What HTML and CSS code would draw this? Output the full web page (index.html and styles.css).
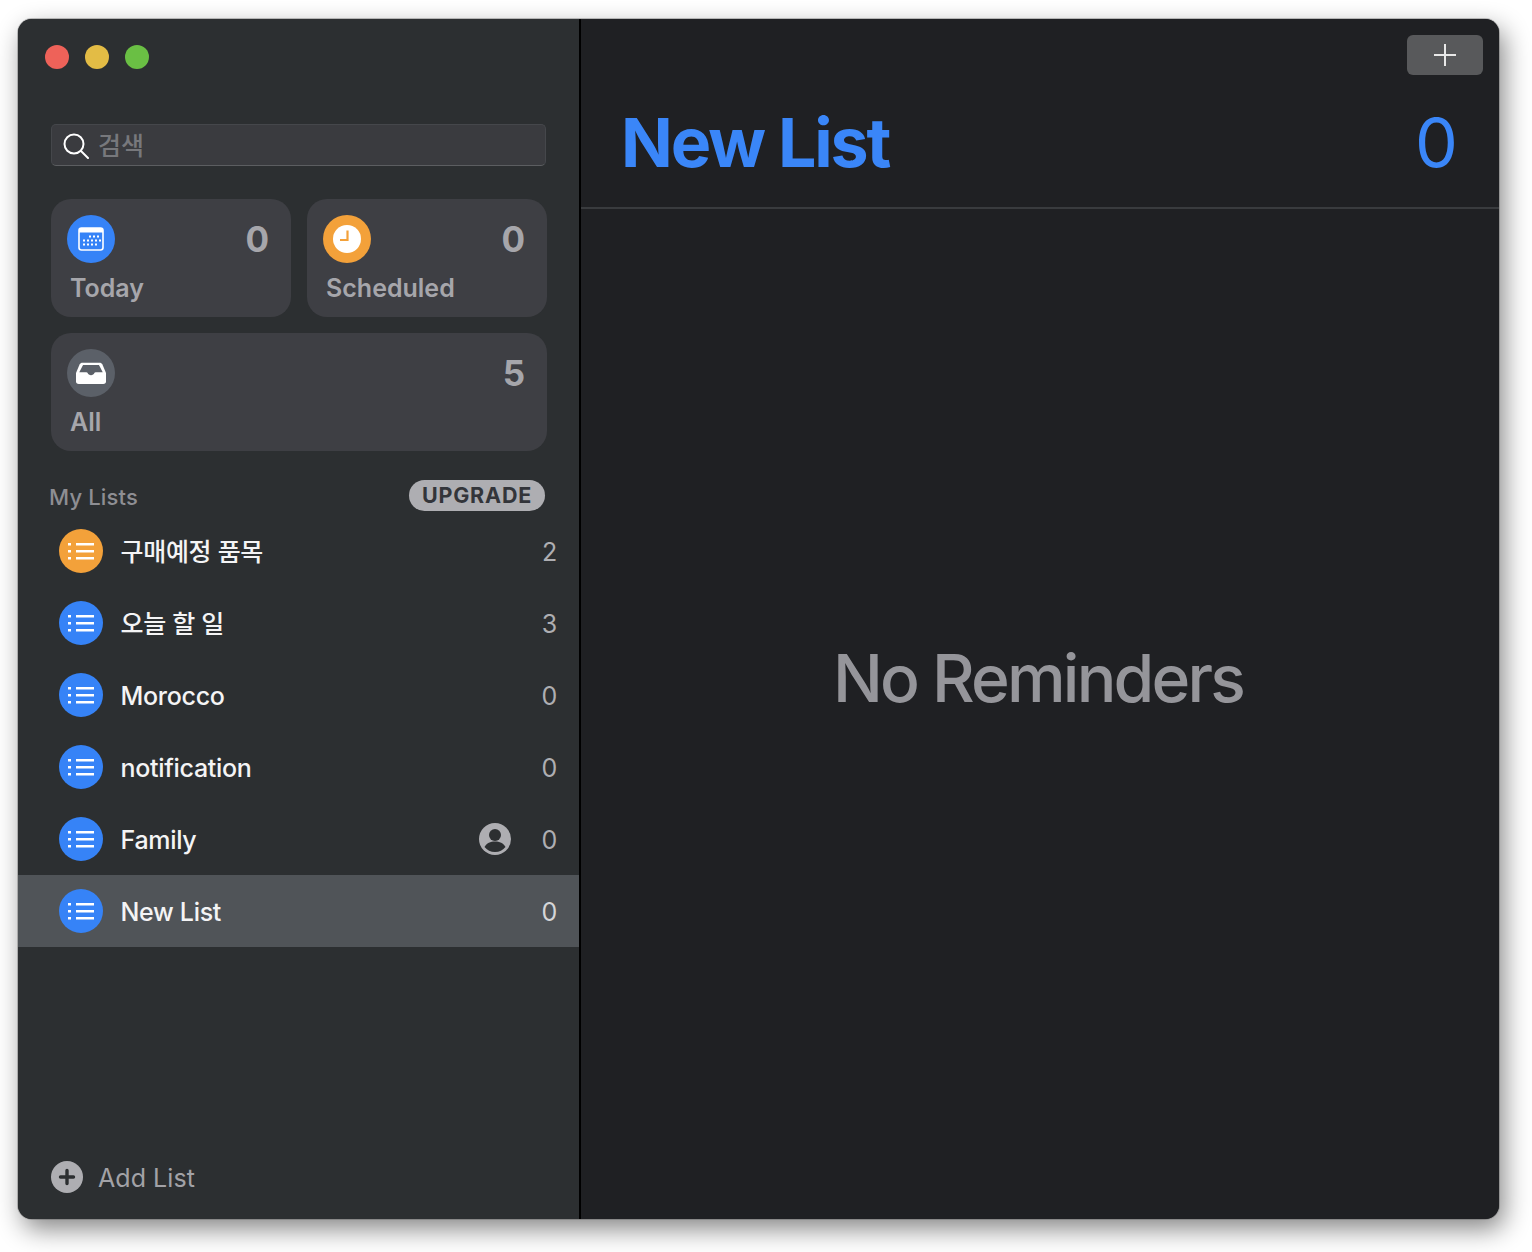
FILE: index.html
```html
<!DOCTYPE html>
<html lang="en">
<head>
  <meta charset="UTF-8" />
  <title>Reminders</title>
  <link rel="stylesheet" href="styles.css">
</head>
<body>

  <div class="window">
    <aside class="sidebar">
      <div class="traffic">
        <span class="dot dot-red"></span>
        <span class="dot dot-yellow"></span>
        <span class="dot dot-green"></span>
      </div>

      <div class="search">
        <svg class="search-icon" viewBox="0 0 26 26" fill="none" stroke="#fff" stroke-width="2">
          <circle cx="11" cy="11" r="9.5" />
          <path d="M18 18l7 7" stroke-linecap="round" />
        </svg>
        <span>검색</span>
      </div>

      <div class="cards">
        <div class="card">
          <div class="card-top">
            <span class="round round-blue">
              <svg viewBox="0 0 28 28" width="28" height="28">
                <rect x="2" y="3" width="24" height="22" rx="2.500" fill="none" stroke="#fff" stroke-width="1.600" />
                <rect x="2" y="3" width="24" height="4.500" fill="#fff" />
                <g fill="#fff">
                  <rect x="12" y="10.500" width="2" height="2" /><rect x="16" y="10.500" width="2" height="2" /><rect x="20" y="10.500" width="2" height="2" />
                  <rect x="6" y="14.500" width="2" height="2" /><rect x="10" y="14.500" width="2" height="2" /><rect x="14" y="14.500" width="2" height="2" /><rect x="18" y="14.500" width="2" height="2" /><rect x="22" y="14.500" width="2" height="2" />
                  <rect x="6" y="18.500" width="2" height="2" /><rect x="10" y="18.500" width="2" height="2" /><rect x="14" y="18.500" width="2" height="2" /><rect x="18" y="18.500" width="2" height="2" />
                </g>
              </svg>
            </span>
            <span class="card-count">0</span>
          </div>
          <div class="card-label">Today</div>
        </div>

        <div class="card">
          <div class="card-top">
            <span class="round round-orange">
              <svg viewBox="0 0 28 28" width="28" height="28">
                <circle cx="14" cy="14" r="14" fill="#fff" />
                <path d="M14.500 5.500v9.500H7" fill="none" stroke="#f3a13a" stroke-width="2.200" />
              </svg>
            </span>
            <span class="card-count">0</span>
          </div>
          <div class="card-label">Scheduled</div>
        </div>

        <div class="card card-wide">
          <div class="card-top">
            <span class="round round-gray">
              <svg viewBox="0 0 32 26" width="30" height="22" preserveAspectRatio="none">
                <path d="M7 1h18c1.500 0 2.500.7 3.200 2L32 13v10c0 1.800-1 3-3 3H3c-2 0-3-1.200-3-3V13L3.800 3C4.500 1.700 5.500 1 7 1z" fill="#fff" />
                <path d="M7.500 3.500h17L28.500 12h-7.500c-.8 0-1.200.4-1.400 1-.6 1.600-2 2.600-3.600 2.600s-3-1-3.600-2.600c-.2-.6-.6-1-1.400-1H3.500z" fill="#5b6068" />
              </svg>
            </span>
            <span class="card-count">5</span>
          </div>
          <div class="card-label">All</div>
        </div>
      </div>

      <div class="lists-head">
        <span class="lists-title">My Lists</span>
        <span class="upgrade">UPGRADE</span>
      </div>

      <ul class="lists">
        <li class="row">
          <span class="list-icon orange"><i></i></span>
          <span class="row-name row-name-ko">구매예정 품목</span>
          <span class="row-count">2</span>
        </li>
        <li class="row">
          <span class="list-icon"><i></i></span>
          <span class="row-name row-name-ko">오늘 할 일</span>
          <span class="row-count">3</span>
        </li>
        <li class="row">
          <span class="list-icon"><i></i></span>
          <span class="row-name">Morocco</span>
          <span class="row-count">0</span>
        </li>
        <li class="row">
          <span class="list-icon"><i></i></span>
          <span class="row-name">notification</span>
          <span class="row-count">0</span>
        </li>
        <li class="row">
          <span class="list-icon"><i></i></span>
          <span class="row-name">Family</span>
          <svg class="shared" viewBox="0 0 32 32">
            <circle cx="16" cy="16" r="16" fill="#aeaeb2" />
            <circle cx="16" cy="12" r="6" fill="#2c2f31" />
            <path d="M5.500 24c2-3.800 6-5.500 10.500-5.500s8.500 1.700 10.500 5.500c-2.500 3-6.200 5-10.500 5s-8-2-10.500-5z" fill="#2c2f31" />
          </svg>
          <span class="row-count">0</span>
        </li>
        <li class="row selected">
          <span class="list-icon"><i></i></span>
          <span class="row-name">New List</span>
          <span class="row-count">0</span>
        </li>
      </ul>

      <div class="add-list">
        <svg viewBox="0 0 32 32" width="32" height="32">
          <circle cx="16" cy="16" r="16" fill="#aeaeb2" />
          <path d="M16 9.500v13M9.500 16h13" stroke="#2c2f31" stroke-width="3.400" stroke-linecap="round" />
        </svg>
        <span class="add-label">Add List</span>
      </div>
    </aside>

    <main class="content">
      <div class="toolbar">
        <button class="add-btn">
          <svg viewBox="0 0 24 24" width="24" height="24" stroke="#e8e8e8" stroke-width="2">
            <path d="M12 1v22M1 12h22" />
          </svg>
        </button>
      </div>
      <header class="content-head">
        <h1>New List</h1>
        <span class="head-count">0</span>
      </header>
      <div class="empty">No Reminders</div>
    </main>
  </div>

</body>
</html>
```

FILE: styles.css
```css
* {
  box-sizing: border-box;
}

body {
  margin: 0;
  height: 1252px;
  padding: 19px 33px 33px 18px;
  background: #fff;
  font-family: Inter, "Noto Sans CJK KR", sans-serif;
  overflow: hidden;
}

.window {
  display: flex;
  height: 1200px;
  border-radius: 14px;
  overflow: hidden;
  background: #1f2023;
  box-shadow: 0 0 0 1px rgba(90, 90, 90, 0.35), 5px 10px 26px rgba(0, 0, 0, 0.48);
}

/* sidebar */
.sidebar {
  width: 561px;
  flex: none;
  display: flex;
  flex-direction: column;
  background: #2c2f31;
}

.traffic {
  display: flex;
  gap: 16px;
  padding: 26px 0 0 27px;
}

.dot {
  width: 24px;
  height: 24px;
  border-radius: 50%;
}

.dot-red { background: #ee6259; }
.dot-yellow { background: #e3bc45; }
.dot-green { background: #6abf44; }

.search {
  display: flex;
  align-items: center;
  gap: 9px;
  width: 495px;
  height: 42px;
  margin: 55px 0 0 33px;
  padding: 0 0 2px 11px;
  background: #3a3b3f;
  border: 1px solid #45474b;
  border-bottom-color: #5c5e61;
  border-radius: 5px;
  color: #77787c;
  font-size: 25px;
  font-weight: 500;
}

.search-icon {
  width: 26px;
  height: 26px;
  margin-top: 3px;
}

.cards {
  display: grid;
  grid-template-columns: 240px 240px;
  gap: 16px;
  margin: 33px 0 0 33px;
}

.card {
  height: 118px;
  padding: 16px 22px 0 16px;
  border-radius: 20px;
  background: #3e3f44;
}

.card-wide {
  grid-column: 1 / 3;
}

.card-top {
  display: flex;
  justify-content: space-between;
  align-items: center;
}

.round {
  display: flex;
  align-items: center;
  justify-content: center;
  width: 48px;
  height: 48px;
  border-radius: 50%;
}

.round-blue { background: #3683f7; }
.round-orange { background: #f3a13a; }
.round-gray { background: #5b6068; }

.card-count {
  color: #a6a6ab;
  font-size: 35px;
  font-weight: 700;
}

.card-label {
  margin: 9px 0 0 3px;
  color: #a6a6ab;
  font-size: 25px;
  font-weight: 600;
  line-height: 32px;
}

.lists-head {
  display: flex;
  justify-content: space-between;
  align-items: center;
  width: 496px;
  margin: 29px 0 0 31px;
}

.lists-title {
  margin-top: 3px;
  color: #8e8e93;
  font-size: 22px;
  font-weight: 500;
  letter-spacing: 0.15px;
}

.upgrade {
  width: 136px;
  height: 31px;
  border-radius: 16px;
  background: #aeaeb2;
  color: #33353a;
  font-size: 21.5px;
  font-weight: 700;
  letter-spacing: 0.8px;
  line-height: 31px;
  text-align: center;
}

.lists {
  list-style: none;
  margin: 4px 0 0;
  padding: 0;
}

.row {
  display: flex;
  align-items: center;
  height: 72px;
  padding: 0 22px 0 41px;
  color: #f4f4f5;
  font-size: 25px;
  font-weight: 500;
  letter-spacing: -0.3px;
}

.row.selected {
  background: #505458;
}

.list-icon {
  display: flex;
  align-items: center;
  justify-content: center;
  width: 44px;
  height: 44px;
  flex: none;
  border-radius: 50%;
  background: #3683f7;
}

.list-icon.orange {
  background: #f3a13a;
}

/* three lines and three dots of the list glyph */
.list-icon i {
  display: block;
  width: 26px;
  height: 17px;
  background:
    linear-gradient(#fff, #fff) 8px 0 / 18px 2.5px no-repeat,
    linear-gradient(#fff, #fff) 8px 7px / 18px 2.5px no-repeat,
    linear-gradient(#fff, #fff) 8px 14px / 18px 2.5px no-repeat,
    linear-gradient(#fff, #fff) 0 0 / 3px 2.5px no-repeat,
    linear-gradient(#fff, #fff) 0 7px / 3px 2.5px no-repeat,
    linear-gradient(#fff, #fff) 0 14px / 3px 2.5px no-repeat;
}

.row-name {
  flex: 1;
  margin-left: 17.5px;
  padding-top: 2px;
}

.row-name-ko {
  padding: 0 0 2px;
}

.shared {
  width: 32px;
  height: 32px;
  margin-right: 31px;
}

.row-count {
  padding-top: 2px;
  color: #aeaeb2;
  font-size: 25px;
  font-weight: 400;
}

.selected .row-count {
  color: #d5d6d8;
}

.add-list {
  display: flex;
  align-items: center;
  gap: 15px;
  margin: auto 0 26px 33px;
  color: #a2a2a7;
  font-size: 25px;
}

.add-label {
  padding-top: 2px;
  letter-spacing: 0.05px;
}

/* divider + main pane */
.content {
  flex: 1;
  display: flex;
  flex-direction: column;
  border-left: 2px solid #000;
  background: #1f2023;
}

.toolbar {
  display: flex;
  justify-content: flex-end;
  padding: 16px 16px 0 0;
}

.add-btn {
  display: flex;
  align-items: center;
  justify-content: center;
  width: 76px;
  height: 40px;
  padding: 0;
  border: 0;
  border-radius: 6px;
  background: #58595b;
}

.content-head {
  display: flex;
  justify-content: space-between;
  align-items: center;
  height: 134px;
  padding: 2px 41px 0 40px;
  border-bottom: 2px solid #393b3e;
  color: #3a86f8;
}

.content-head h1 {
  margin: 0;
  font-size: 68px;
  font-weight: 700;
  letter-spacing: -2.1px;
}

.head-count {
  font-size: 68px;
  font-weight: 400;
}

.empty {
  flex: 1;
  display: flex;
  align-items: center;
  justify-content: center;
  padding: 0 4px 72px 0;
  color: #95959a;
  font-size: 66px;
  font-weight: 500;
  letter-spacing: -2.8px;
}
```
